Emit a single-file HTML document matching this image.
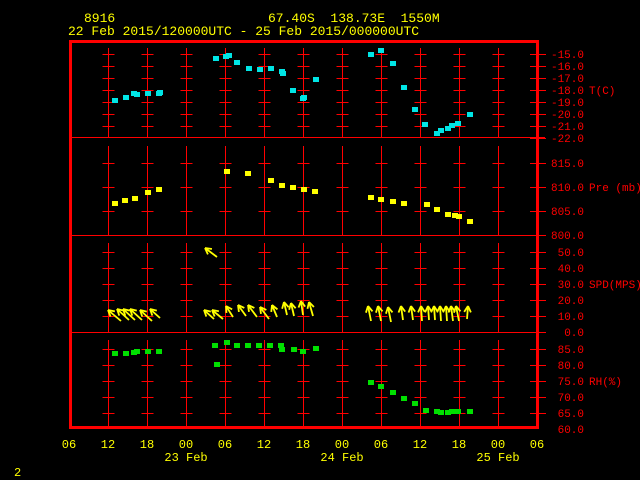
<!DOCTYPE html>
<html><head><meta charset="utf-8"><style>
html,body{margin:0;padding:0;background:#000;}
svg{display:block}
.h{font-family:"Liberation Mono",monospace;font-size:13px;fill:#ffff00}
.r{font-family:"Liberation Mono",monospace;font-size:11px;fill:#ff0000}
</style></head><body>
<svg id="s" width="640" height="480" viewBox="0 0 640 480" xmlns="http://www.w3.org/2000/svg">
<rect width="640" height="480" fill="#000"/>
<g id="grid" stroke="#f00" stroke-width="1" fill="none" shape-rendering="crispEdges"></g>
<rect x="70.5" y="41.5" width="467" height="386" fill="none" stroke="#f00" stroke-width="3" shape-rendering="crispEdges"/>
<g stroke="#f00" stroke-width="1" shape-rendering="crispEdges">
<line x1="70" y1="137.5" x2="545" y2="137.5"/>
<line x1="70" y1="235.5" x2="545" y2="235.5"/>
<line x1="70" y1="332.5" x2="545" y2="332.5"/>
</g>
<g id="data"></g>
<text class="h" x="84" y="22">8916</text>
<text class="h" x="268" y="22" xml:space="preserve">67.40S  138.73E  1550M</text>
<text class="h" x="68" y="35">22 Feb 2015/120000UTC - 25 Feb 2015/000000UTC</text>
<g class="r" text-anchor="end">
<text x="584" y="58">-15.0</text><text x="584" y="70">-16.0</text><text x="584" y="82">-17.0</text><text x="584" y="94">-18.0</text><text x="584" y="106">-19.0</text><text x="584" y="118">-20.0</text><text x="584" y="130">-21.0</text><text x="584" y="142">-22.0</text>
<text x="584" y="167">815.0</text><text x="584" y="191">810.0</text><text x="584" y="215">805.0</text><text x="584" y="239">800.0</text>
<text x="584" y="256">50.0</text><text x="584" y="272">40.0</text><text x="584" y="288">30.0</text><text x="584" y="304">20.0</text><text x="584" y="320">10.0</text><text x="584" y="336">0.0</text>
<text x="584" y="353">85.0</text><text x="584" y="369">80.0</text><text x="584" y="385">75.0</text><text x="584" y="401">70.0</text><text x="584" y="417">65.0</text><text x="584" y="433">60.0</text>
</g>
<g class="r">
<text x="589" y="94">T(C)</text>
<text x="589" y="191">Pre (mb)</text>
<text x="589" y="288">SPD(MPS)</text>
<text x="589" y="385">RH(%)</text>
</g>
<g class="h" style="font-size:12px" text-anchor="middle">
<text x="69" y="448">06</text><text x="108" y="448">12</text><text x="147" y="448">18</text><text x="186" y="448">00</text><text x="225" y="448">06</text><text x="264" y="448">12</text><text x="303" y="448">18</text><text x="342" y="448">00</text><text x="381" y="448">06</text><text x="420" y="448">12</text><text x="459" y="448">18</text><text x="498" y="448">00</text><text x="537" y="448">06</text>
<text x="186" y="461">23 Feb</text><text x="342" y="461">24 Feb</text><text x="498" y="461">25 Feb</text>
</g>
<text class="h" x="14" y="476" style="font-size:12px">2</text>
</svg>
<script>
var NS="http://www.w3.org/2000/svg";
function el(p,n,a){var e=document.createElementNS(NS,n);for(var k in a)e.setAttribute(k,a[k]);p.appendChild(e);return e;}
var g=document.getElementById('grid'),d=document.getElementById('data');
var panels=[[48,137,[54,66,78,90,102,114,126]],[146,235,[163,187,211]],[243,332,[252,268,284,300,316]],[340,427,[349,365,381,397,413]]];
for(var i=0;i<11;i++){var x=108+39*i+0.5;
 panels.forEach(function(p){el(g,'line',{x1:x,y1:p[0],x2:x,y2:p[1]});
  p[2].forEach(function(y){el(g,'line',{x1:x-6,y1:y+0.5,x2:x+6,y2:y+0.5});});});}
[54,66,78,90,102,114,126,138,163,187,211,235,252,268,284,300,316,332,349,365,381,397,413].forEach(function(y){el(g,'line',{x1:530,y1:y+0.5,x2:546,y2:y+0.5});});
function pts(arr,c){for(var i=0;i<arr.length;i+=2)el(d,'rect',{x:arr[i]-3,y:arr[i+1]-3,width:6,height:5,fill:c});}
pts([115,101,126,98,134,94,137,95,148,94,159,94,160,93,216,59,226,57,229,56,237,63,249,69,260,70,271,69,282,72,283,74,293,91,303,99,304,98,316,80,371,55,381,51,393,64,404,88,415,110,425,125,437,134,441,131,448,129,452,126,458,124,470,115],'#00e5e5');
pts([115,204,125,201,135,199,148,193,159,190,227,172,248,174,271,181,282,186,293,188,304,190,315,192,371,198,381,200,393,202,404,204,427,205,437,210,448,215,455,216,459,217,470,222],'#ffff00');
pts([115,354,126,354,134,353,137,352,148,352,159,352,215,346,217,365,227,343,237,346,248,346,259,346,270,346,281,346,282,350,294,350,303,352,316,349,371,383,381,387,393,393,404,399,415,404,426,411,437,412,441,413,448,413,452,412,458,412,470,412],'#00e000');
function arrow(x1,y1,x2,y2){var a=Math.atan2(y2-y1,x2-x1),L=7;
 el(d,'line',{x1:x1,y1:y1,x2:x2,y2:y2,stroke:'#ff0','stroke-width':1.8});
 [0.5,-0.5].forEach(function(o){el(d,'line',{x1:x2,y1:y2,x2:x2-L*Math.cos(a+o),y2:y2-L*Math.sin(a+o),stroke:'#ff0','stroke-width':1.8});});}
[[121,321,108,310],[129,320,117,309],[135,320,123,309],[142,320,130,309],[152,321,140,310],[160,318,150,309],[217,257,205,248]].forEach(function(v){arrow.apply(null,v);});
[[214,319,204,310],[223,319,212,310],[233,317,226,306],[246,316,238,305],[257,317,248,305],[269,319,260,307],[277,317,272,305],[287,315,284,302],[294,316,291,303],[303,315,301,301],[313,316,309,302]].forEach(function(v){arrow.apply(null,v);});
[[371,321,368,306],[381,321,378,306],[391,322,388,307],[403,320,401,306],[413,320,411,306],[422,321,421,306],[429,320,428,306],[435,320,434,306],[441,321,440,306],[447,321,446,306],[453,321,451,306],[459,321,456,306],[467,319,468,306]].forEach(function(v){arrow.apply(null,v);});
</script>
</body></html>
